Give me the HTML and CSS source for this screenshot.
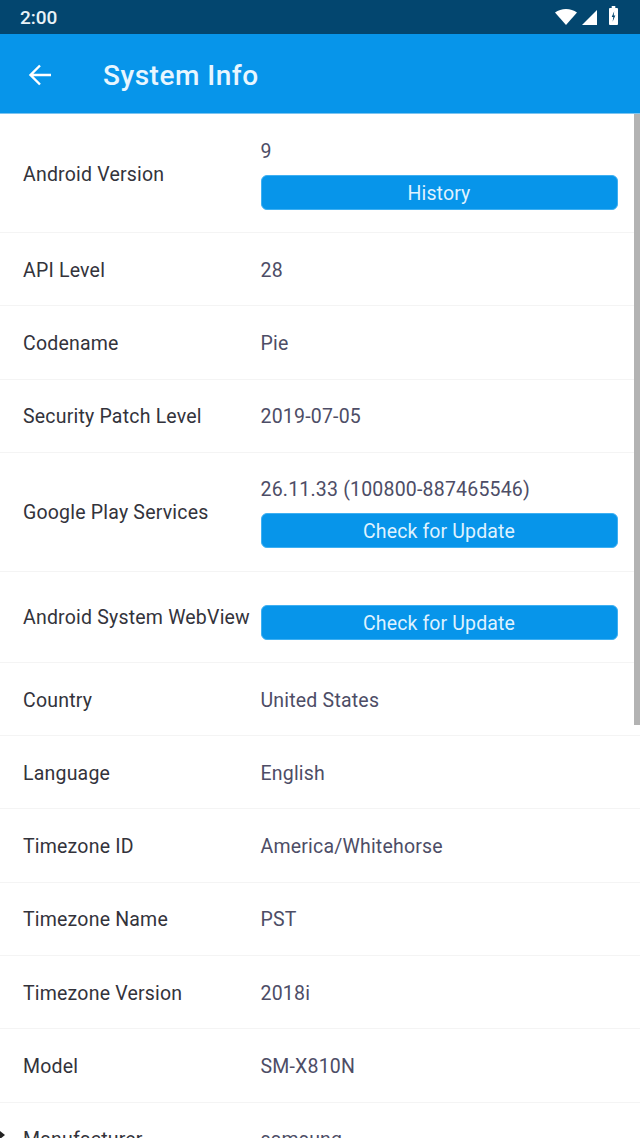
FILE: index.html
```html
<!DOCTYPE html>
<html lang="en">
<head>
<meta charset="utf-8">
<title>System Info</title>
<link rel="stylesheet" href="styles.css">
</head>
<body>
<div class="screen">
  <div class="status">
    <span class="clock">2:00</span>
    <div class="status-icons">
      <svg class="wifi" width="22" height="16" viewBox="0 0 22 16"><path class="w" d="M0 3.500C3 1.200 7 0 11 0s8 1.200 11 3.500L11 16z"/></svg>
      <svg class="signal" width="15" height="15" viewBox="0 0 15 15"><path class="w" d="M15 0v15H0z"/></svg>
      <svg class="battery" width="9" height="19" viewBox="0 0 10 18" preserveAspectRatio="none"><path class="w" fill-rule="evenodd" d="M3 0h4v2h2a1 1 0 0 1 1 1v14a1 1 0 0 1-1 1H1a1 1 0 0 1-1-1V3a1 1 0 0 1 1-1h2zM5.800 5 3 10.500h1.800L4 15l3-6H5.200z"/></svg>
    </div>
  </div>
  <header class="appbar">
    <svg class="back" width="24" height="24" viewBox="0 0 24 24"><path d="M23 12H2.500M12 2.500 2.500 12l9.500 9.500" fill="none" stroke="#fff" stroke-width="2.400"/></svg>
    <h1 class="title">System Info</h1>
  </header>
  <main class="list">
    <div class="row tall"><div class="key">Android Version</div><div class="val"><div>9</div><button class="btn">History</button></div></div>
    <div class="row"><div class="key">API Level</div><div class="val">28</div></div>
    <div class="row"><div class="key">Codename</div><div class="val">Pie</div></div>
    <div class="row"><div class="key">Security Patch Level</div><div class="val">2019-07-05</div></div>
    <div class="row tall"><div class="key">Google Play Services</div><div class="val"><div>26.11.33 (100800-887465546)</div><button class="btn">Check for Update</button></div></div>
    <div class="row mid"><div class="key">Android System WebView</div><div class="val"><button class="btn">Check for Update</button></div></div>
    <div class="row"><div class="key">Country</div><div class="val">United States</div></div>
    <div class="row"><div class="key">Language</div><div class="val">English</div></div>
    <div class="row"><div class="key">Timezone ID</div><div class="val">America/Whitehorse</div></div>
    <div class="row"><div class="key">Timezone Name</div><div class="val">PST</div></div>
    <div class="row"><div class="key">Timezone Version</div><div class="val">2018i</div></div>
    <div class="row"><div class="key">Model</div><div class="val">SM-X810N</div></div>
    <div class="row"><div class="key">Manufacturer</div><div class="val">samsung</div></div>
  </main>
  <div class="scrollbar"></div>
  <div class="cursor"></div>
</div>
</body>
</html>
```
FILE: styles.css
```css
* { box-sizing: border-box; }
html, body { margin: 0; padding: 0; }
body { background: #fff; font-family: Roboto, "Noto Sans", sans-serif; }
.screen { position: relative; width: 640px; height: 1138px; overflow: hidden; background: #fff; }
.status { height: 34px; background: #03466f; display: flex; align-items: center; justify-content: space-between; padding: 0 22px 0 20px; }
.clock { color: #e9f2f7; font-size: 19px; font-weight: 500; }
.status-icons { display: flex; align-items: center; }
.status-icons svg { display: block; }
.signal { margin-left: 5px; }
.battery { margin-left: 12px; margin-top: -3px; }
.w { fill: #fff; }
.appbar { height: 80px; background: #0795ea; display: flex; align-items: center; padding: 2px 0 0 28px; border-bottom: 1px solid #7cc4f0; }
.back { display: block; flex: none; }
.title { margin: 2px 0 0 51px; color: #e8f6ff; font-size: 28px; font-weight: 500; letter-spacing: 0.5px; }
.list { display: flex; flex-direction: column; }
.row { height: 73.300px; flex: none; display: flex; align-items: center; padding: 2px 0 0 23px; border-bottom: 1px solid #f4f4f4; }
.row.tall { height: 119px; }
.row.mid { height: 91px; }
.key { width: 237.500px; flex: none; color: #33333b; font-size: 19.500px; letter-spacing: 0.2px; white-space: nowrap; }
.val { width: 357px; flex: none; color: #4d4d66; font-size: 19.500px; letter-spacing: 0.2px; white-space: nowrap; }
.tall .val { padding-top: 1px; }
.mid .val { padding-top: 10px; }
.btn { display: block; width: 100%; height: 35px; margin-top: 12px; border: 1px solid #3fb0f2; border-radius: 6px; background: #0795ea; color: #dff2ff; font-family: inherit; font-size: 19.500px; letter-spacing: 0.13px; padding: 2px 0 0; }
.mid .btn { margin-top: 0; }
.scrollbar { position: absolute; right: 0; top: 114px; width: 6px; height: 611px; background: #b3b3b3; }
.cursor { position: absolute; left: 0; top: 1131px; width: 0; height: 0; border-left: 5px solid #222; border-top: 4px solid transparent; border-bottom: 4px solid transparent; }
```
